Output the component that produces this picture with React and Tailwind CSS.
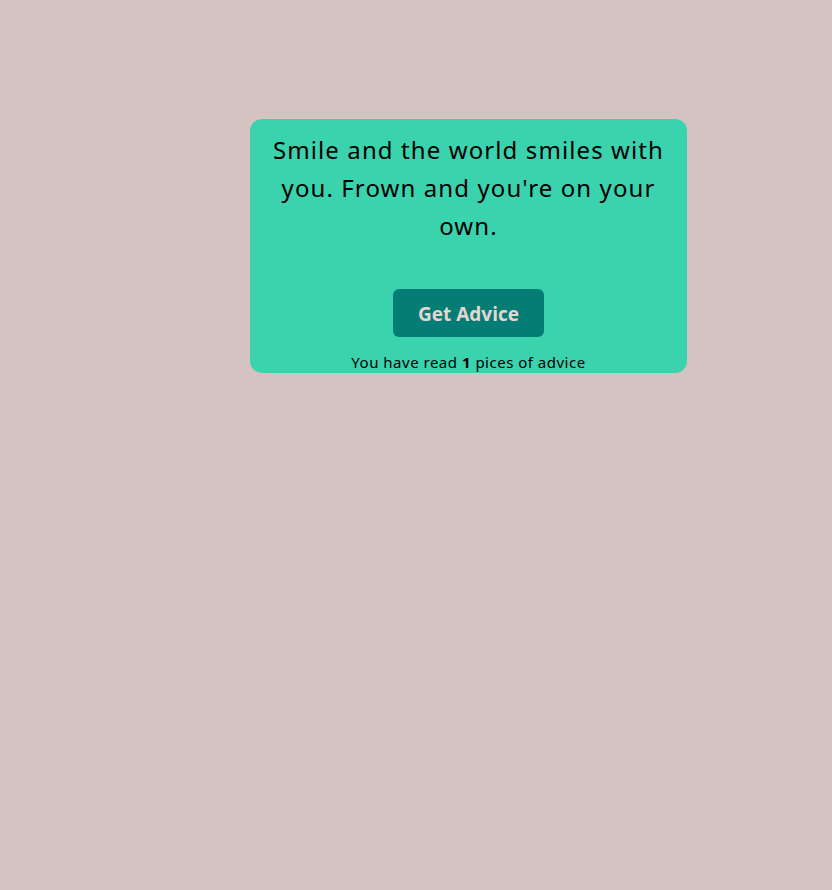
export default function App() {
  return (
    <div className="min-h-[890px] w-full bg-[#d5c3c2] pt-[119px]" style={{ fontFamily: '"Noto Sans", sans-serif' }}>
      <div className="ml-[250px] flex w-[437px] flex-col items-center rounded-[12px] bg-[#3bd3ae] px-[16px] pt-[12px]">
        <p className="text-center text-[24px] leading-[38px] tracking-[1.1px] text-black">
          Smile and the world smiles with you. Frown and you're on your own.
        </p>
        <button
          className="mt-[44px] h-[48px] w-[151px] rounded-[6px] bg-[#047d74] pt-[3px] text-[19px] font-bold text-[#e6d6d2]"
          style={{ fontFamily: '"Open Sans", sans-serif' }}
        >
          Get Advice
        </button>
        <p className="mt-[14px] text-[15px] leading-[22px] tracking-[0.5px] text-black">
          You have read <b>1</b> pices of advice
        </p>
      </div>
    </div>
  );
}
